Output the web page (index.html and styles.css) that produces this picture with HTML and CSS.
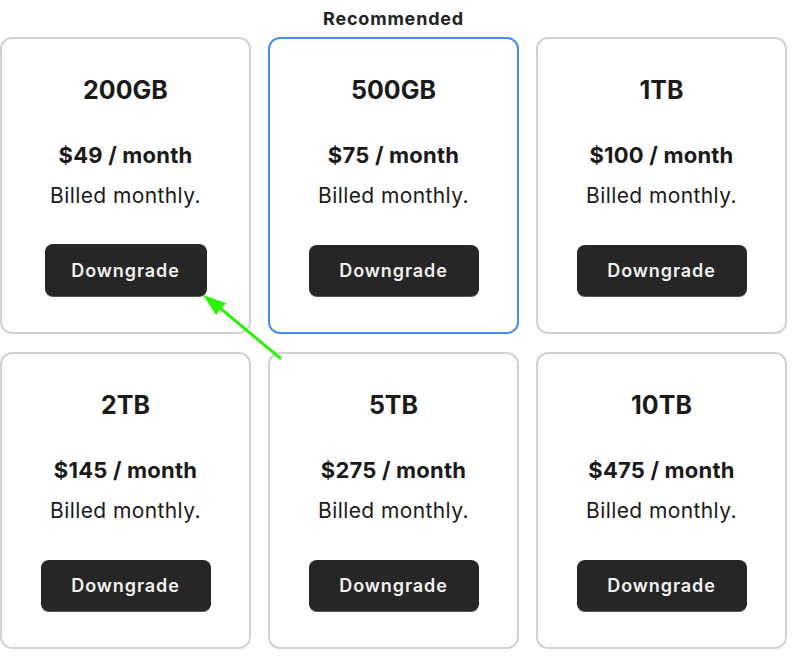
FILE: index.html
```html
<!DOCTYPE html>
<html>
<head>
<meta charset="utf-8">
<link rel="stylesheet" href="styles.css">
</head>
<body>
<div class="page">
  <div class="grid">
    <div class="card">
      <div class="title">200GB</div>
      <div class="price">$49 / month</div>
      <div class="billed">Billed monthly.</div>
      <button class="btn btn-narrow">Downgrade</button>
    </div>
    <div class="card card-rec">
      <div class="badge">Recommended</div>
      <div class="title">500GB</div>
      <div class="price">$75 / month</div>
      <div class="billed">Billed monthly.</div>
      <button class="btn">Downgrade</button>
    </div>
    <div class="card">
      <div class="title">1TB</div>
      <div class="price">$100 / month</div>
      <div class="billed">Billed monthly.</div>
      <button class="btn">Downgrade</button>
    </div>
    <div class="card">
      <div class="title">2TB</div>
      <div class="price">$145 / month</div>
      <div class="billed">Billed monthly.</div>
      <button class="btn">Downgrade</button>
    </div>
    <div class="card">
      <div class="title">5TB</div>
      <div class="price">$275 / month</div>
      <div class="billed">Billed monthly.</div>
      <button class="btn">Downgrade</button>
    </div>
    <div class="card">
      <div class="title">10TB</div>
      <div class="price">$475 / month</div>
      <div class="billed">Billed monthly.</div>
      <button class="btn">Downgrade</button>
    </div>
  </div>
  <svg class="arrow" width="800" height="658" viewBox="0 0 800 658">
    <line x1="280" y1="358" x2="214" y2="303" stroke="#2af20a" stroke-width="3" stroke-linecap="round"/>
    <polygon points="203,295 226,303 216,315" fill="#2af20a"/>
  </svg>
</div>
</body>
</html>
```
FILE: styles.css
```css
html, body {
  margin: 0;
  padding: 0;
  background: #ffffff;
}
.page {
  position: relative;
  width: 800px;
  height: 658px;
  font-family: Inter, "DejaVu Sans", sans-serif;
  color: #1a1a1a;
}
.grid {
  display: grid;
  grid-template-columns: 251px 251px 251px;
  grid-auto-rows: 297px;
  column-gap: 17px;
  row-gap: 18px;
  padding-top: 37px;
}
.card {
  position: relative;
  box-sizing: border-box;
  border: 2px solid #d2d2d2;
  border-radius: 12px;
  display: flex;
  flex-direction: column;
  align-items: center;
  padding-top: 35px;
}
.card-rec {
  border-color: #4a8ef2;
}
.badge {
  position: absolute;
  bottom: 100%;
  left: 0;
  right: 0;
  margin-bottom: 9px;
  text-align: center;
  font-size: 18px;
  font-weight: 700;
  letter-spacing: 0.8px;
  line-height: 22px;
  color: #222;
}
.title {
  font-size: 25px;
  font-weight: 700;
  line-height: 32px;
}
.price {
  margin-top: 36px;
  font-size: 22px;
  font-weight: 700;
  line-height: 26px;
  letter-spacing: 0.2px;
}
.billed {
  margin-top: 15px;
  font-size: 21px;
  font-weight: 400;
  line-height: 26px;
  letter-spacing: 0.4px;
}
.btn {
  margin-top: 36px;
  width: 170px;
  height: 51px;
  border: none;
  border-radius: 8px;
  background: #262626;
  color: #f2f2f2;
  font-family: Inter, "DejaVu Sans", sans-serif;
  font-size: 18px;
  font-weight: 600;
  letter-spacing: 0.9px;
  box-shadow: 0 1px 0 #555;
}
.btn-narrow {
  width: 162px;
  height: 52px;
  margin-top: 35px;
}
.arrow {
  position: absolute;
  left: 0;
  top: 0;
  pointer-events: none;
}
```
